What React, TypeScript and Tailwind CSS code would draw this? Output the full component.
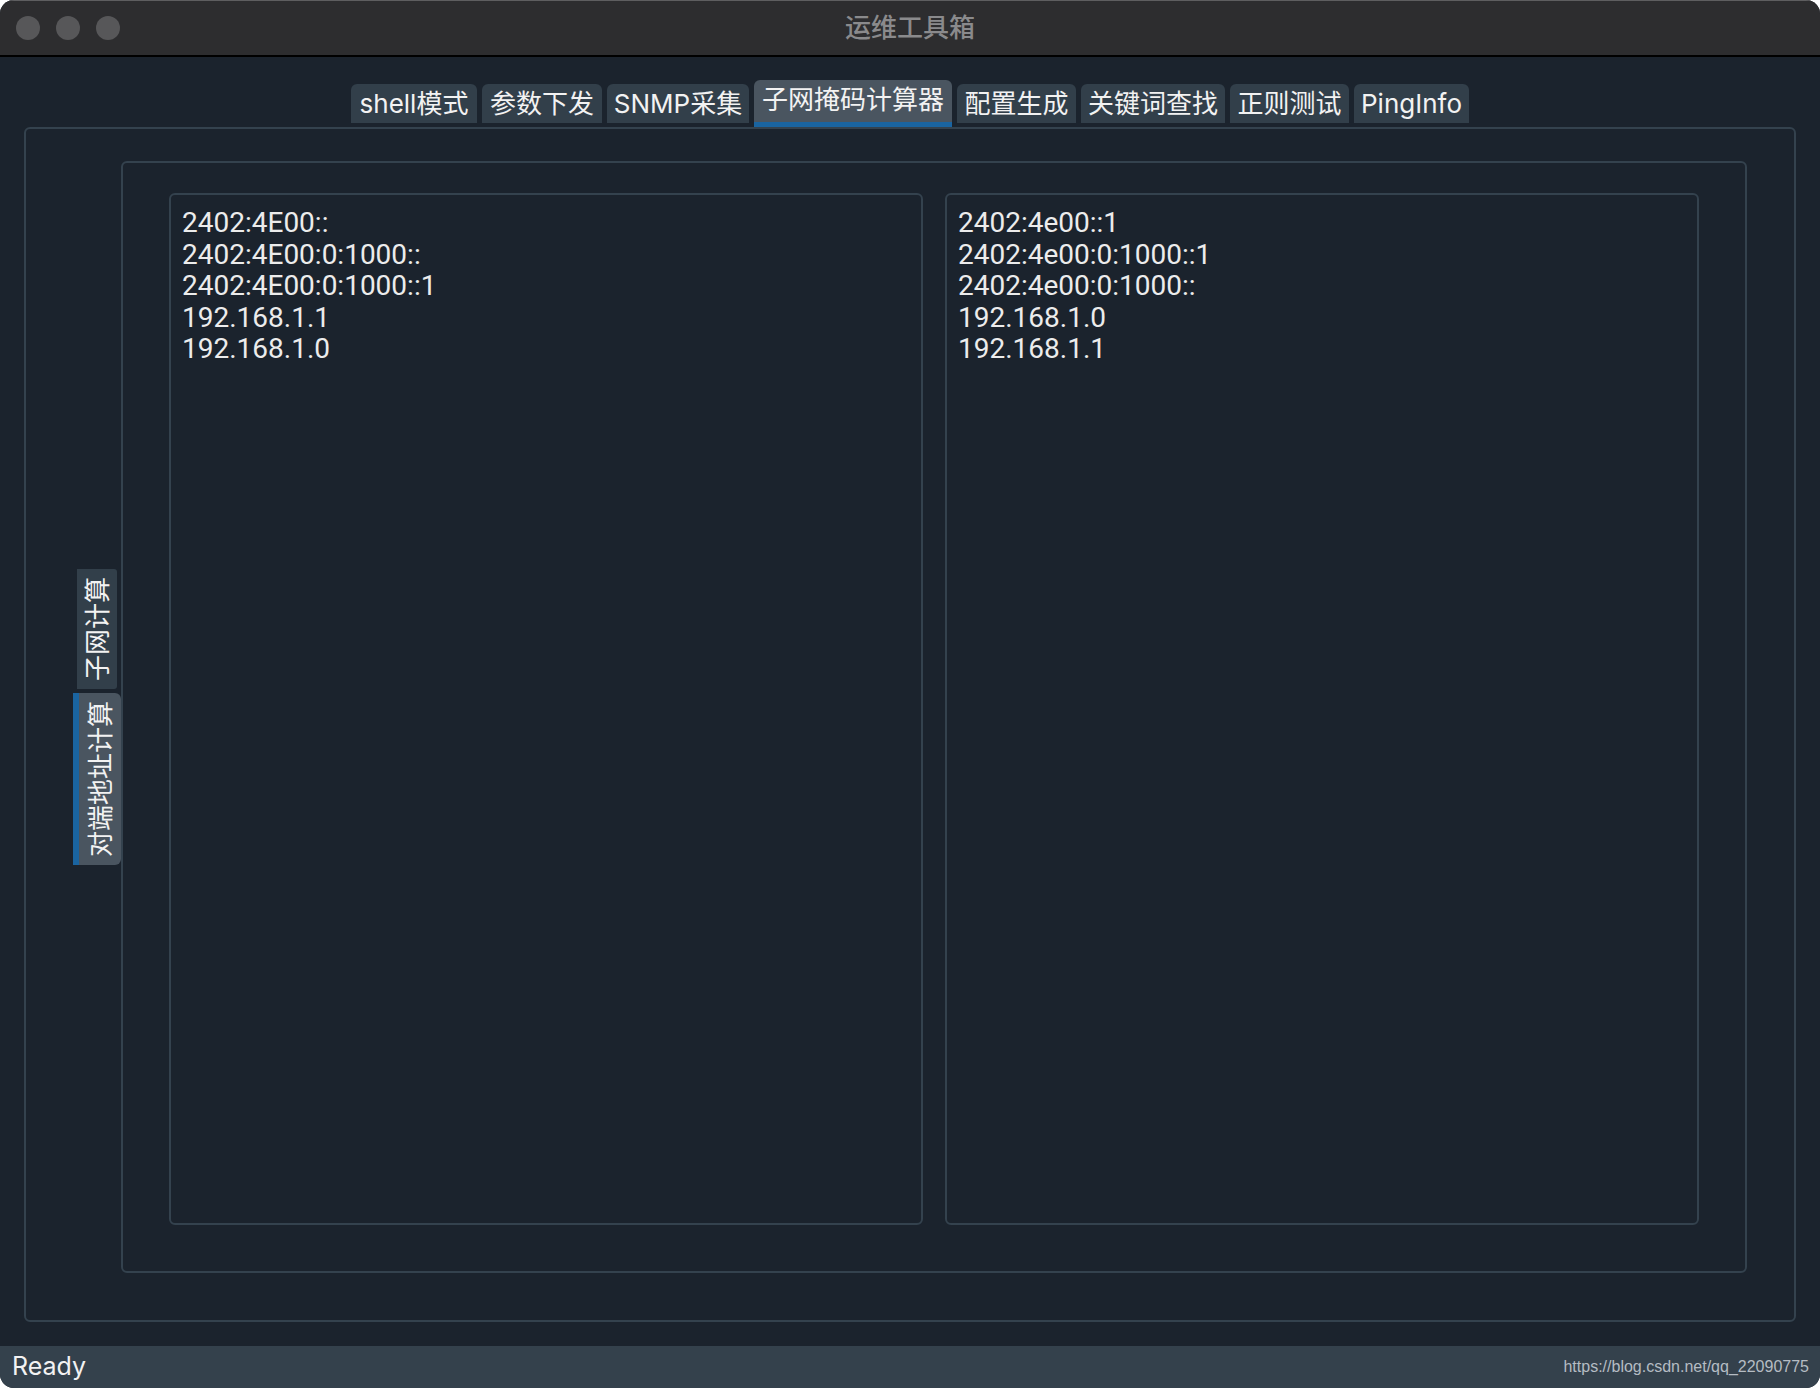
import React, { useState } from 'react';

const FONT = "font-['Inter','Noto_Sans_CJK_SC',sans-serif]";

const topTabs = [
  { label: 'shell模式', width: 'w-[126px]' },
  { label: '参数下发', width: 'w-[120px]' },
  { label: 'SNMP采集', width: 'w-[142px]' },
  { label: '子网掩码计算器', width: 'w-[198px]' },
  { label: '配置生成', width: 'w-[119px]' },
  { label: '关键词查找', width: 'w-[144px]' },
  { label: '正则测试', width: 'w-[119px]' },
  { label: 'PingInfo', width: 'w-[115px]' },
];

const sideTabs = ['子网计算', '对端地址计算'];

const leftText = ['2402:4E00::', '2402:4E00:0:1000::', '2402:4E00:0:1000::1', '192.168.1.1', '192.168.1.0'].join('\n');
const rightText = ['2402:4e00::1', '2402:4e00:0:1000::1', '2402:4e00:0:1000::', '192.168.1.0', '192.168.1.1'].join('\n');

const TrafficLight = () => <span className="block h-[24px] w-[24px] rounded-full bg-[#575759]" />;

const TextPane = ({ value }: { value: string }) => (
  <textarea
    readOnly
    value={value}
    spellCheck={false}
    className="flex-1 resize-none rounded-[6px] border-2 border-[#34424e] bg-[#1b232d] pl-[11px] pr-[12px] pt-[12px] font-['Roboto','Noto_Sans_CJK_SC',sans-serif] text-[28px] leading-[31.5px] text-[#ececec] outline-none"
  />
);

const SideLabel = ({ text }: { text: string }) => (
  <span className="rotate-180 [text-orientation:sideways] [writing-mode:vertical-rl]">{text}</span>
);

export default function App() {
  const [activeTop, setActiveTop] = useState(3);
  const [activeSide, setActiveSide] = useState(1);

  return (
    <div className={`h-[1388px] w-[1820px] bg-white ${FONT}`}>
      <div className="flex h-full flex-col overflow-hidden rounded-[14px] bg-[#1b232d]">
        {/* title bar */}
        <div className="relative flex h-[57px] shrink-0 items-center border-t border-b-2 border-t-[#5e5e60] border-b-black bg-[#2d2d2f] pl-[16px]">
          <div className="flex gap-[16px]">
            <TrafficLight />
            <TrafficLight />
            <TrafficLight />
          </div>
          <div className="absolute inset-x-0 top-[8px] text-center text-[26px] font-medium leading-[38px] text-[#8a8a8c]">运维工具箱</div>
        </div>

        {/* tab bar */}
        <div className="flex h-[70px] shrink-0 items-end justify-center gap-[5px]">
          {topTabs.map((tab, i) =>
            i === activeTop ? (
              <button
                key={tab.label}
                onClick={() => setActiveTop(i)}
                className={`${tab.width} h-[47px] rounded-t-[6px] border-b-[5px] border-[#1a64a0] bg-[#4a5560] pb-[2px] text-[26px] leading-[40px] text-[#f2f2f2]`}
              >
                {tab.label}
              </button>
            ) : (
              <button
                key={tab.label}
                onClick={() => setActiveTop(i)}
                className={`${tab.width} mb-[4px] h-[39px] rounded-t-[6px] bg-[#323f4a] text-[26px] leading-[39px] text-[#f2f2f2]`}
              >
                {tab.label}
              </button>
            )
          )}
        </div>

        {/* outer panel */}
        <div className="mx-[24px] mb-[24px] flex flex-1 items-stretch rounded-[6px] border-2 border-[#34424e] pb-[47px] pl-[46px] pr-[47px] pt-[32px]">
          <div className="flex w-[49px] shrink-0 flex-col items-end justify-center gap-[4px]">
            {sideTabs.map((label, i) =>
              i === activeSide ? (
                <button
                  key={label}
                  onClick={() => setActiveSide(i)}
                  className="flex h-[172px] w-[48px] items-center justify-center rounded-r-[6px] border-l-[6px] border-[#1a64a0] bg-[#4a5560] text-[26px] text-[#f2f2f2]"
                >
                  <SideLabel text={label} />
                </button>
              ) : (
                <button
                  key={label}
                  onClick={() => setActiveSide(i)}
                  className="mr-[4px] flex h-[120px] w-[40px] items-center justify-center rounded-r-[3px] bg-[#323f4a] text-[26px] text-[#f2f2f2]"
                >
                  <SideLabel text={label} />
                </button>
              )
            )}
          </div>

          {/* inner panel */}
          <div className="flex flex-1 gap-[22px] rounded-[6px] border-2 border-[#34424e] pb-[46px] pl-[46px] pr-[46px] pt-[30px]">
            <TextPane value={leftText} />
            <TextPane value={rightText} />
          </div>
        </div>

        {/* status bar */}
        <div className="flex h-[42px] shrink-0 items-center justify-between bg-[#34414c] pl-[12px] pr-[11px]">
          <span className="text-[25px] text-[#f2f2f2]">Ready</span>
          <span className="font-['Liberation_Sans',sans-serif] text-[16px] text-[#b5bcc3]">https://blog.csdn.net/qq_22090775</span>
        </div>
      </div>
    </div>
  );
}
